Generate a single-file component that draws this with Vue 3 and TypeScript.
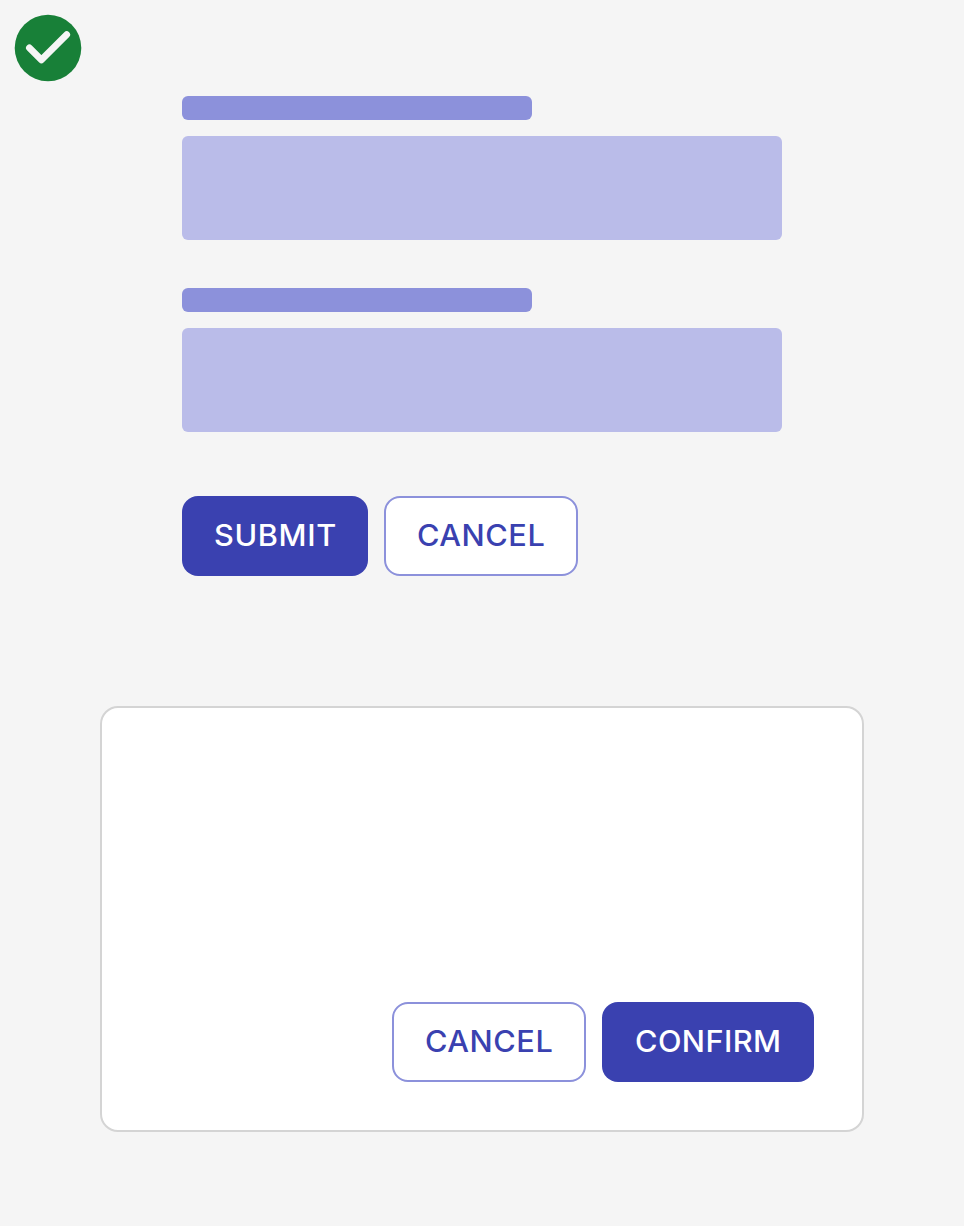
<script setup lang="ts">
interface Field {
  id: number
}

const fields: Field[] = [{ id: 1 }, { id: 2 }]
</script>

<template>
  <main class="page">
    <svg class="status" viewBox="0 0 96 96" aria-hidden="true">
      <circle cx="48" cy="48" r="33.3" fill="#188038" />
      <path d="M29.4 47.9L41.4 59.9L66.7 34.6" fill="none" stroke="#f5f5f5" stroke-width="6.8" stroke-linecap="round" stroke-linejoin="round" />
    </svg>

    <section class="form">
      <div v-for="field in fields" :key="field.id" class="field">
        <div class="label"></div>
        <div class="input"></div>
      </div>
      <div class="actions">
        <button type="button" class="btn primary submit"><span>SUBMIT</span></button>
        <button type="button" class="btn secondary cancel"><span>CANCEL</span></button>
      </div>
    </section>

    <section class="dialog">
      <button type="button" class="btn secondary cancel"><span>CANCEL</span></button>
      <button type="button" class="btn primary confirm"><span>CONFIRM</span></button>
    </section>
  </main>
</template>

<style>
body {
  background: #f5f5f5;
}
</style>

<style scoped>
.page {
  box-sizing: border-box;
  width: 964px;
  height: 1226px;
  background: #f5f5f5;
  font-family: Inter, "Liberation Sans", sans-serif;
  overflow: hidden;
}

.status {
  display: block;
  width: 96px;
  height: 96px;
}

.form {
  width: 600px;
  margin-left: 182px;
}

.field {
  margin-bottom: 48px;
}

.label {
  width: 350px;
  height: 24px;
  border-radius: 6px;
  background: #8c91db;
}

.input {
  height: 104px;
  margin-top: 16px;
  border-radius: 6px;
  background: #babce9;
}

.actions {
  display: flex;
  gap: 16px;
  padding-top: 16px;
}

.btn {
  box-sizing: border-box;
  display: flex;
  align-items: center;
  justify-content: flex-start;
  height: 80px;
  margin: 0;
  padding: 0 0 2px 32px;
  border: 0;
  border-radius: 16px;
  font-family: inherit;
  font-size: 29.5px;
  font-weight: 500;
  line-height: 40px;
  white-space: nowrap;
}

.btn span {
  transform: scaleX(1.04);
  transform-origin: left center;
}

.primary {
  background: #3a41b0;
  color: #fff;
}

.secondary {
  padding-left: 31px;
  border: 2px solid #8c91db;
  background: #fff;
  color: #3a41b0;
}

.submit {
  width: 186px;
  letter-spacing: 0.6px;
}

.cancel {
  width: 194px;
  letter-spacing: 0.5px;
}

.confirm {
  width: 212px;
  padding-left: 32.5px;
  letter-spacing: 0.4px;
}

.dialog {
  box-sizing: border-box;
  display: flex;
  align-items: flex-end;
  justify-content: flex-end;
  gap: 16px;
  width: 764px;
  height: 426px;
  margin: 130px 0 0 100px;
  padding: 48px;
  border: 2px solid #d4d4d4;
  border-radius: 18px;
  background: #fff;
}
</style>
